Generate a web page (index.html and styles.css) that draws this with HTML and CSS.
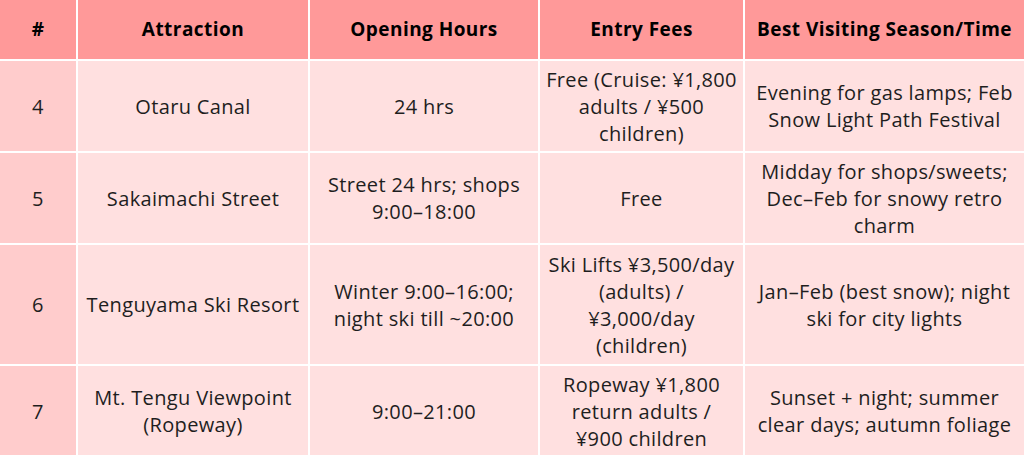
FILE: index.html
```html
<!DOCTYPE html>
<html lang="en">
<head>
<meta charset="utf-8">
<title>Otaru Attractions</title>
<link rel="stylesheet" href="styles.css">
</head>
<body>
<div class="table">
  <div class="cell head">#</div>
  <div class="cell head">Attraction</div>
  <div class="cell head">Opening Hours</div>
  <div class="cell head">Entry Fees</div>
  <div class="cell head">Best Visiting Season/Time</div>

  <div class="cell num">4</div>
  <div class="cell">Otaru Canal</div>
  <div class="cell">24 hrs</div>
  <div class="cell">Free (Cruise: ¥1,800<br>adults / ¥500<br>children)</div>
  <div class="cell">Evening for gas lamps; Feb<br>Snow Light Path Festival</div>

  <div class="cell num">5</div>
  <div class="cell">Sakaimachi Street</div>
  <div class="cell">Street 24 hrs; shops<br>9:00–18:00</div>
  <div class="cell">Free</div>
  <div class="cell">Midday for shops/sweets;<br>Dec–Feb for snowy retro<br>charm</div>

  <div class="cell num">6</div>
  <div class="cell">Tenguyama Ski Resort</div>
  <div class="cell">Winter 9:00–16:00;<br>night ski till ~20:00</div>
  <div class="cell">Ski Lifts ¥3,500/day<br>(adults) /<br>¥3,000/day<br>(children)</div>
  <div class="cell">Jan–Feb (best snow); night<br>ski for city lights</div>

  <div class="cell num">7</div>
  <div class="cell">Mt. Tengu Viewpoint<br>(Ropeway)</div>
  <div class="cell">9:00–21:00</div>
  <div class="cell">Ropeway ¥1,800<br>return adults /<br>¥900 children</div>
  <div class="cell">Sunset + night; summer<br>clear days; autumn foliage</div>
</div>
</body>
</html>
```
FILE: styles.css
```css
html, body {
  margin: 0;
  padding: 0;
  background: #ffffff;
}
body {
  width: 1024px;
  height: 455px;
  overflow: hidden;
  font-family: "Open Sans", "Liberation Sans", sans-serif;
}
.table {
  display: grid;
  grid-template-columns: 76px 230px 228px 203px 279px;
  grid-template-rows: 59px 90px 90px 119px 90px;
  gap: 2px;
  background: #ffffff;
}
.cell {
  display: flex;
  align-items: center;
  justify-content: center;
  text-align: center;
  white-space: nowrap;
  background: #ffe0e0;
  color: #1e1e1e;
  font-size: 20px;
  letter-spacing: 0.35px;
  line-height: 27px;
}
.head {
  background: #ff9999;
  color: #000000;
  font-weight: 700;
  font-size: 19px;
  letter-spacing: 0.45px;
}
.num {
  background: #ffcccc;
}
```
